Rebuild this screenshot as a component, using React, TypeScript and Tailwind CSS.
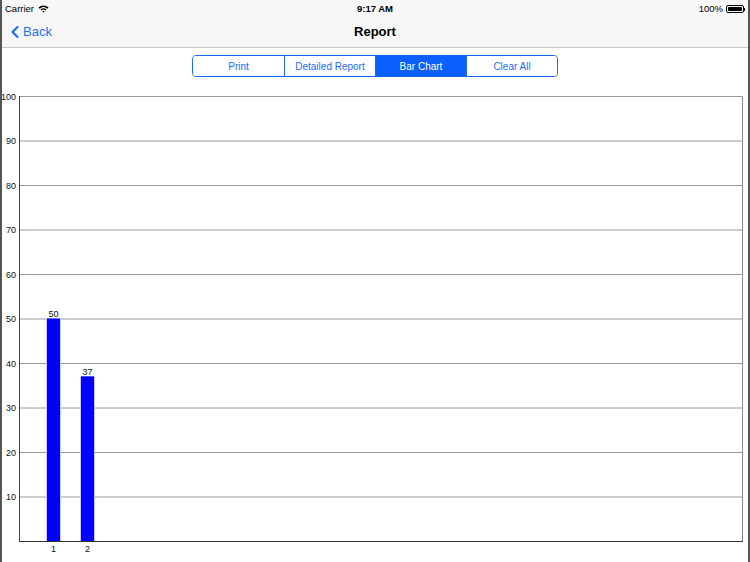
import { ChevronLeft } from "lucide-react";

const segments = ["Print", "Detailed Report", "Bar Chart", "Clear All"];
const data = [
  { label: "1", value: 50, x: 47 },
  { label: "2", value: 37, x: 81 },
];

const top = 96;
const bottom = 541;
const step = (bottom - top) / 10;

function Wifi() {
  return (
    <svg width="11" height="8" viewBox="0 0 11 8" className="ml-1">
      <path d="M0.5 2.6 A7 7 0 0 1 10.5 2.6 L9.4 3.7 A5.5 5.5 0 0 0 1.6 3.7 Z" fill="#000" />
      <path d="M2.4 4.5 A4.3 4.3 0 0 1 8.6 4.5 L7.5 5.6 A2.8 2.8 0 0 0 3.5 5.6 Z" fill="#000" />
      <path d="M4.3 6.4 A1.7 1.7 0 0 1 6.7 6.4 L5.5 7.6 Z" fill="#000" />
    </svg>
  );
}

function Battery() {
  return (
    <div className="ml-[3px] flex items-center">
      <div className="flex h-[8px] w-[18px] items-center rounded-[2px] border border-black p-[1px]">
        <div className="h-full w-full rounded-[1px] bg-black" />
      </div>
      <div className="h-[3px] w-[1px] bg-black" />
    </div>
  );
}

function Chart() {
  return (
    <svg width="746" height="474" viewBox="2 88 746 474" className="block">
      {Array.from({ length: 10 }).map((_, i) => {
        const y = top + i * step;
        return (
          <g key={i}>
            <line x1={19.5} x2={742.5} y1={y + 0.5} y2={y + 0.5} stroke="#9a9a9a" strokeWidth="1" />
            <text
              x={16}
              y={y + 3.5}
              textAnchor="end"
              fontSize="9"
              fontFamily="'Liberation Sans', Arial, sans-serif"
              fill="#111"
            >
              {100 - i * 10}
            </text>
          </g>
        );
      })}
      <line x1={742.5} x2={742.5} y1={96.5} y2={541.5} stroke="#8a8a8a" strokeWidth="1" />
      <line x1={19.5} x2={19.5} y1={96} y2={542} stroke="#444" strokeWidth="1" />
      <line x1={19} x2={743} y1={541.5} y2={541.5} stroke="#333" strokeWidth="1" />
      {data.map((d) => {
        const h = (d.value / 100) * (bottom - top);
        const y = bottom - h;
        return (
          <g key={d.label}>
            <rect x={d.x - 1} y={y} width={15} height={h} fill="#c9c9ff" />
            <rect x={d.x} y={y} width={13} height={h} fill="#0000ff" />
            <text
              x={d.x + 6.5}
              y={y - 1.5}
              textAnchor="middle"
              fontSize="9"
              fontFamily="'Liberation Sans', Arial, sans-serif"
              fill="#111"
            >
              {d.value}
            </text>
            <text
              x={d.x + 6.5}
              y={552}
              textAnchor="middle"
              fontSize="9"
              fontFamily="'Liberation Sans', Arial, sans-serif"
              fill="#111"
            >
              {d.label}
            </text>
          </g>
        );
      })}
    </svg>
  );
}

export default function App() {
  return (
    <div className="flex h-[562px] w-[750px] flex-col overflow-hidden border-x-2 border-[#555] bg-white font-['Liberation_Sans',Arial,sans-serif]">
      <div className="border-b border-[#c8c8c8] bg-[#f7f7f7]">
        <div className="relative flex h-[17px] items-center justify-between px-[3px] pt-[1px] text-[9.5px] text-black">
          <div className="flex items-center">
            <span>Carrier</span>
            <Wifi />
          </div>
          <span className="absolute left-1/2 -translate-x-1/2 font-bold">9:17 AM</span>
          <div className="flex items-center">
            <span>100%</span>
            <Battery />
          </div>
        </div>
        <div className="relative flex h-[30px] items-center">
          <div className="flex items-center pl-[3px] text-[13px] text-[#1a73f0]">
            <ChevronLeft size={20} strokeWidth={2.6} className="-mr-[2px]" />
            <span>Back</span>
          </div>
          <span className="absolute left-1/2 -translate-x-1/2 text-[13px] font-bold text-black">Report</span>
        </div>
      </div>
      <div className="flex justify-center pt-[7px]">
        <div className="flex h-[22px] overflow-hidden rounded-[4px] border border-[#1a6cf5]">
          {segments.map((s, i) => (
            <div
              key={s}
              className={`flex w-[91px] items-center justify-center text-[10px] ${
                i > 0 ? "border-l border-[#1a6cf5]" : ""
              } ${s === "Bar Chart" ? "bg-[#0a5ffd] text-white" : "bg-white text-[#1a6cf5]"}`}
            >
              {s}
            </div>
          ))}
        </div>
      </div>
      <div className="mt-[11px]">
        <Chart />
      </div>
    </div>
  );
}
